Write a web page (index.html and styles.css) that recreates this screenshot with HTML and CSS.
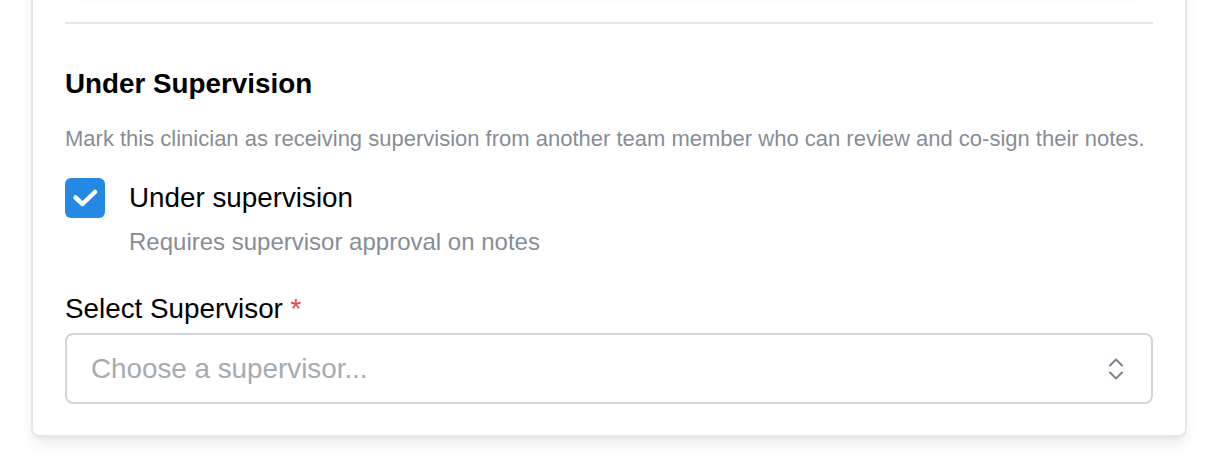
FILE: index.html
```html
<!DOCTYPE html>
<html lang="en">
<head>
<meta charset="utf-8">
<title>Under Supervision</title>
<link rel="stylesheet" href="styles.css">
</head>
<body>
<div class="page">
  <div class="card">
    <div class="prev-block"></div>
    <hr class="divider">
    <section class="section">
      <h2 class="heading">Under Supervision</h2>
      <p class="desc">Mark this clinician as receiving supervision from another team member who can review and co-sign their notes.</p>
      <div class="check-row">
        <span class="checkbox">
          <svg viewBox="0 0 40 40" width="40" height="40" aria-hidden="true">
            <path d="M10.5 19.5 L17.5 26 L30 14" fill="none" stroke="#fff" stroke-width="4.5" stroke-linecap="round" stroke-linejoin="round"/>
          </svg>
        </span>
        <div class="check-text">
          <div class="check-label">Under supervision</div>
          <div class="check-hint">Requires supervisor approval on notes</div>
        </div>
      </div>
      <label class="field-label">Select Supervisor <span class="req">*</span></label>
      <div class="select">
        <span class="placeholder">Choose a supervisor...</span>
        <svg class="chevrons" viewBox="0 0 16 24" width="16" height="24" aria-hidden="true">
          <path d="M2 8.5 L8 2.5 L14 8.5" fill="none" stroke="#7b8490" stroke-width="2" stroke-linecap="round" stroke-linejoin="round"/>
          <path d="M2 15.5 L8 21.5 L14 15.5" fill="none" stroke="#7b8490" stroke-width="2" stroke-linecap="round" stroke-linejoin="round"/>
        </svg>
      </div>
    </section>
  </div>
</div>
</body>
</html>
```
FILE: styles.css
```css
* { box-sizing: border-box; }
html, body { margin: 0; padding: 0; background: #ffffff; }
body {
  font-family: "Liberation Sans", Arial, sans-serif;
  color: #000;
  overflow: hidden;
}
.page {
  padding: 0 29px 40px 31px;
}
.card {
  margin-top: -200px;
  border: 2px solid #e5e7eb;
  border-radius: 8px;
  background: #fff;
  padding: 32px 32px 31px 32px;
  box-shadow: 0 10px 15px -3px rgba(0,0,0,0.08), 0 4px 6px -4px rgba(0,0,0,0.08);
}
.prev-block {
  height: 160px;
  margin: 0 12px;
  background: #fff;
  box-shadow: 0 4px 10px rgba(0,0,0,0.035);
}
.divider {
  margin: 28px 0 0 0;
  border: 0;
  height: 2px;
  background: #e2e5e9;
}
.section {
  padding-top: 40px;
}
.heading {
  margin: 0;
  font-size: 27.8px;
  line-height: 40px;
  font-weight: 700;
}
.desc {
  margin: 19px 0 0 0;
  font-size: 22px;
  line-height: 32px;
  color: #878d96;
}
.check-row {
  display: flex;
  align-items: flex-start;
  gap: 24px;
  margin-top: 23px;
}
.checkbox {
  flex: none;
  width: 40px;
  height: 40px;
  border-radius: 6px;
  background: #2489e5;
  display: block;
}
.checkbox svg { display: block; }
.check-label {
  font-size: 27.8px;
  line-height: 40px;
}
.check-hint {
  margin-top: 8px;
  font-size: 24px;
  line-height: 32px;
  color: #878d96;
}
.field-label {
  display: block;
  margin-top: 31px;
  font-size: 27.8px;
  line-height: 40px;
}
.req { color: #ef4444; }
.select {
  margin-top: 4px;
  height: 71px;
  border: 2px solid #d1d5db;
  border-radius: 8px;
  display: flex;
  align-items: center;
  justify-content: space-between;
  padding: 0 27px 0 24px;
}
.placeholder {
  font-size: 27.8px;
  color: #a5abb3;
}
.chevrons { display: block; flex: none; }
```
